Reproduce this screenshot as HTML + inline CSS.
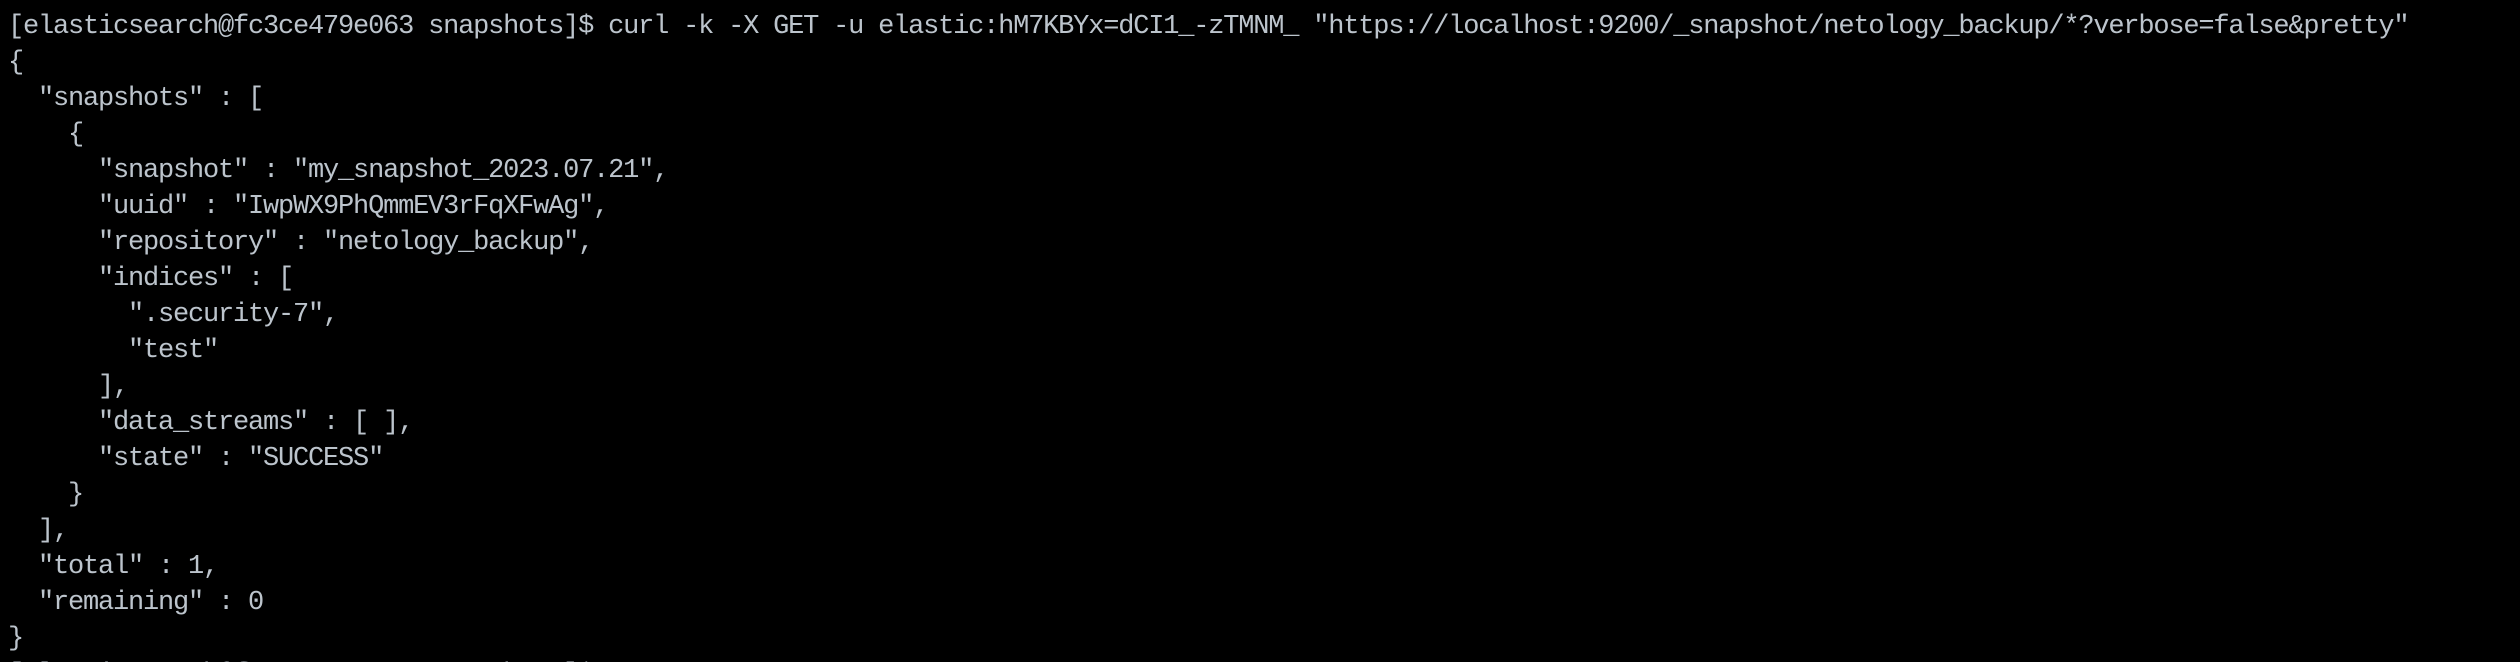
<!DOCTYPE html>
<html><head><meta charset="utf-8"><style>
html,body{margin:0;padding:0;background:#000;width:2520px;height:662px;overflow:hidden;position:relative}
pre{margin:0;position:absolute;left:8px;top:9px;font-family:"Liberation Mono","DejaVu Sans Mono",monospace;font-size:27px;letter-spacing:-1.2px;line-height:36px;color:#bcc4cc;white-space:pre}
</style></head><body>
<pre>[elasticsearch@fc3ce479e063 snapshots]$ curl -k -X GET -u elastic:hM7KBYx=dCI1_-zTMNM_ "https://localhost:9200/_snapshot/netology_backup/*?verbose=false&amp;pretty"
{
  "snapshots" : [
    {
      "snapshot" : "my_snapshot_2023.07.21",
      "uuid" : "IwpWX9PhQmmEV3rFqXFwAg",
      "repository" : "netology_backup",
      "indices" : [
        ".security-7",
        "test"
      ],
      "data_streams" : [ ],
      "state" : "SUCCESS"
    }
  ],
  "total" : 1,
  "remaining" : 0
}
[elasticsearch@fc3ce479e063 snapshots]$ </pre>
</body></html>
